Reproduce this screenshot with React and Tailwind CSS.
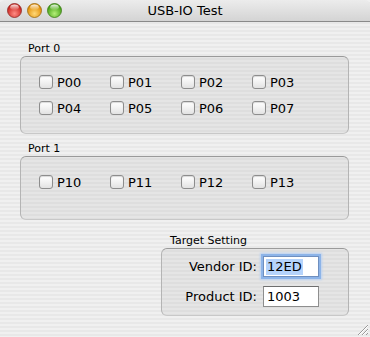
import React from "react";

const font = { fontFamily: '"DejaVu Sans", "Liberation Sans", sans-serif' };

function Light({ c1, c2, c3 }) {
  return (
    <svg width="15" height="15" viewBox="0 0 15 15">
      <defs>
        <radialGradient id={"g" + c1} cx="50%" cy="72%" r="62%">
          <stop offset="0%" stopColor={c1} />
          <stop offset="100%" stopColor={c2} />
        </radialGradient>
        <linearGradient id={"h" + c1} x1="0" y1="0" x2="0" y2="1">
          <stop offset="0%" stopColor="#ffffff" stopOpacity="0.9" />
          <stop offset="100%" stopColor="#ffffff" stopOpacity="0" />
        </linearGradient>
      </defs>
      <circle cx="7.5" cy="7.5" r="7" fill={`url(#g${c1})`} stroke={c3} strokeWidth="0.8" />
      <ellipse cx="7.5" cy="4.3" rx="4.3" ry="2.8" fill={`url(#h${c1})`} />
    </svg>
  );
}

function Check({ label }) {
  return (
    <div className="flex items-center h-[14px]">
      <div className="w-[14px] h-[14px] rounded-[3px] border border-[#8d8d8d] bg-[linear-gradient(to_bottom,#ffffff,#f2f2f2_50%,#e2e2e2)] shadow-[inset_0_1px_1px_rgba(0,0,0,0.15)]" />
      <span className="ml-[4px] text-[13px] text-black leading-none">{label}</span>
    </div>
  );
}

function GroupLabel({ children, className = "" }) {
  return (
    <div className={"h-[14px] text-[11px] leading-[14px] text-black " + className}>{children}</div>
  );
}

const boxCls =
  "rounded-[6px] border border-[#b4b4b4] border-t-[#9a9a9a] border-b-[#c8c8c8] bg-black/[0.045]";

export default function App() {
  return (
    <div
      style={font}
      className="relative w-[370px] h-[337px] overflow-hidden bg-[repeating-linear-gradient(to_bottom,#f0f0f0_0px,#f0f0f0_2px,#e8e8e8_2px,#e8e8e8_4px)]"
    >
      {/* title bar */}
      <div className="relative h-[22px] border-b border-[#8a8a8a] bg-[linear-gradient(to_bottom,#ececec,#d4d4d4)] flex items-center pl-[7px] gap-[5px] rounded-t-[5px]">
        <Light c1="#ff8c84" c2="#c81e18" c3="#8e2a26" />
        <Light c1="#ffd877" c2="#e08a00" c3="#9a6a10" />
        <Light c1="#b4ee78" c2="#3f9e12" c3="#3d7a18" />
        <div className="absolute inset-0 flex items-center justify-center text-[13px] text-black pointer-events-none">
          USB-IO Test
        </div>
      </div>

      <div className="pl-[20px] pr-[21px]">
        <GroupLabel className="mt-[20px] pl-[8px]">Port 0</GroupLabel>
        <div className={boxCls + " h-[78px] pt-[18px] pl-[18px]"}>
          <div className="grid grid-cols-[71px_71px_71px_71px] gap-y-[12px]">
            {["P00", "P01", "P02", "P03", "P04", "P05", "P06", "P07"].map((l) => (
              <Check key={l} label={l} />
            ))}
          </div>
        </div>

        <GroupLabel className="mt-[8px] pl-[8px]">Port 1</GroupLabel>
        <div className={boxCls + " h-[64px] pt-[18px] pl-[18px]"}>
          <div className="grid grid-cols-[71px_71px_71px_71px]">
            {["P10", "P11", "P12", "P13"].map((l) => (
              <Check key={l} label={l} />
            ))}
          </div>
        </div>

        <div className="flex justify-end">
          <div className="w-[188px]">
            <GroupLabel className="mt-[14px] pl-[9px]">Target Setting</GroupLabel>
            <div className={boxCls + " h-[68px] pt-[7px] pr-[29px] flex flex-col items-end gap-[9px]"}>
              <div className="flex items-center">
                <span className="text-[13px] text-black mr-[6px]">Vendor ID:</span>
                <div className="w-[56px] h-[21px] bg-white border border-[#6f8fbf] shadow-[0_0_0_2px_#8db4e8,0_0_2px_3px_#b9d1f2] flex items-center pl-[2px]">
                  <span className="text-[13px] leading-[16px] text-black bg-[#b5d3fb] px-[1px]">12ED</span>
                </div>
              </div>
              <div className="flex items-center">
                <span className="text-[13px] text-black mr-[6px]">Product ID:</span>
                <div className="w-[56px] h-[21px] bg-white border border-[#8e8e8e] border-t-[#6e6e6e] flex items-center pl-[3px]">
                  <span className="text-[13px] leading-[16px] text-black">1003</span>
                </div>
              </div>
            </div>
          </div>
        </div>
      </div>

      {/* resize grip */}
      <svg className="absolute right-[1px] bottom-[1px]" width="12" height="12" viewBox="0 0 12 12">
        <line x1="11" y1="1" x2="1" y2="11" stroke="#9a9a9a" strokeWidth="1" />
        <line x1="11" y1="5" x2="5" y2="11" stroke="#9a9a9a" strokeWidth="1" />
        <line x1="11" y1="9" x2="9" y2="11" stroke="#9a9a9a" strokeWidth="1" />
        <line x1="11" y1="2" x2="2" y2="11" stroke="#ffffff" strokeWidth="1" />
        <line x1="11" y1="6" x2="6" y2="11" stroke="#ffffff" strokeWidth="1" />
      </svg>
    </div>
  );
}
